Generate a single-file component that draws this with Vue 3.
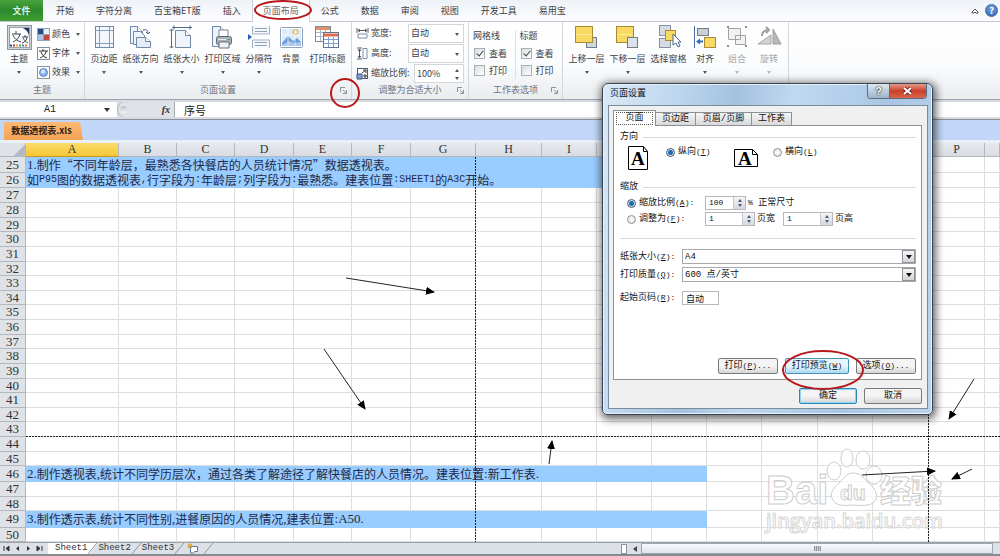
<script setup>
import { ref } from 'vue'

const tabs = ['开始', '字符分离', '百宝箱ET版', '插入', '页面布局', '公式', '数据', '审阅', '视图', '开发工具', '易用宝']

const page = (x, y, w, h) =>
  `<path d="M${x} ${y}h${w - 5}l5 5v${h - 5}h${-w}z" fill="#eef4fb" stroke="#7188a6"/><path d="M${x + w - 5} ${y}v5h5" fill="#fff" stroke="#7188a6"/>`

const icons = {
  theme: `<rect x=".5" y=".5" width="24" height="24" fill="#cfd4d9" stroke="#8d949b"/><rect x="2.500" y="2.500" width="20" height="20" fill="#fff" stroke="#9aa3ad"/><path d="M16 3h6v9c0-4-2-7-6-9z" fill="#1d2f63"/><path d="M5 9h9M9 6v3M6 17c4-2 6-4 7-8M6 10c1 3 4 6 8 7M15 12h6M18 10v2M15 18c3-1 5-3 5-6M16 13c1 2 3 4 5 5" fill="none" stroke="#3b4754"/><path d="M3 20.500h2" stroke="#27509b" stroke-width="2"/><path d="M6 20.500h2" stroke="#c33" stroke-width="2"/><path d="M9 20.500h2" stroke="#e8a23a" stroke-width="2"/><path d="M12 20.500h2" stroke="#6a9a3b" stroke-width="2"/><path d="M15 20.500h2" stroke="#2a9ac0" stroke-width="2"/><path d="M18 20.500h2" stroke="#e07b25" stroke-width="2"/>`,
  margins: `<rect x="3.500" y="1.500" width="18" height="21" fill="#f4f8fc" stroke="#7188a6"/><path d="M7.500 2v20M17.500 2v20M4 5.500h17M4 18.500h17" stroke="#7f9fc9"/>`,
  orient: page(2.5, 1.500, 12, 17) + `<path d="M5.500 6.500h7l4 4v9h-11z" fill="#eef4fb" stroke="#7188a6"/><path d="M8.500 12.500h9l5 4v6h-14z" fill="#e4edf7" stroke="#7188a6"/><path d="M17.500 12.500v4h5" fill="#fff" stroke="#7188a6"/><path d="M15 5c3-1 5 0 5 4M18 7l2 2 2-2" fill="none" stroke="#3b5d93"/>`,
  size: `<path d="M3 2.500h20M5 .5v4M21 .5v4M2.500 4v19M.5 5h4M.5 22h4" stroke="#53698d" fill="none"/>` + page(6.5, 5.500, 15, 17),
  area: page(2.5, 1.500, 13, 20) + `<path d="M9 11v-6h9v6" fill="#fff" stroke="#7b8590"/><rect x="6.500" y="11.500" width="15" height="8" rx="2" fill="#a9b1ba" stroke="#5c6670"/><path d="M9 17h10v6h-10z" fill="#eef2f5" stroke="#68737e"/><path d="M8 14.500h8" stroke="#e8edf0"/><path d="M18 14.500h2" stroke="#4d9a49"/>`,
  breaks: `<path d="M5.500 1v8h17v-8M5.500 23v-8h17v8" fill="#f4f8fc" stroke="#9fb2c9"/><path d="M8 3.500h12M8 6.500h12M8 17.500h12M8 20.500h12" stroke="#8fa2b9"/><path d="M1 9l4 3-4 3z" fill="#285cc0"/>`,
  background: `<rect x="1.500" y="2.500" width="22" height="20" rx="1" fill="#fff" stroke="#8ca0b8"/><rect x="3" y="4" width="19" height="17" fill="#dcebfa"/><circle cx="16.500" cy="7" r="2.500" fill="#fff0b8" stroke="#e0a24a"/><path d="M3 18l6-7 5 5 4-3 4 4v4h-19z" fill="#6d9edb"/><path d="M3 20l7-4 5 2 7-1v4h-19z" fill="#a9c8ee"/><path d="M9 3v18M16 10v11M3 10h19" stroke="#fff" opacity=".6"/>`,
  titles: `<rect x=".5" y="1.500" width="15" height="15" fill="#fff" stroke="#7b8ba0"/><path d="M1 3.500h14" stroke="#e2906a" stroke-width="3"/><path d="M1 7.500h14M1 11.500h14M5.500 5v11M10.500 5v11" stroke="#a8b8cc"/><rect x="8.500" y="7.500" width="15" height="15" fill="#fff" stroke="#61748f"/><path d="M9 10h14" stroke="#dc6f4c" stroke-width="3"/><path d="M9 14.500h14M9 18.500h14M13.500 12v10M18.500 12v10" stroke="#7ea0d0"/>`,
  forward: `<rect x="12.500" y="12.500" width="10" height="10" fill="#cfd7df" stroke="#6f7a86"/><rect x="1.500" y="1.500" width="17" height="16" fill="#f8d964" stroke="#a98c32"/><path d="M3 9.500h14" stroke="#fff0a5"/>`,
  backward: `<rect x="1.500" y="1.500" width="17" height="16" fill="#f8d964" stroke="#a98c32"/><path d="M3 9.500h14" stroke="#fff0a5"/><rect x="12.500" y="12.500" width="10" height="10" fill="#dbe2e9" stroke="#6f7a86"/>`,
  pane: `<rect x="3.500" y=".5" width="11" height="10" fill="#d5dbe1" stroke="#89939e"/><rect x="3.500" y="13.500" width="11" height="9" fill="#d5dbe1" stroke="#89939e"/><rect x="9.500" y="5.500" width="10" height="10" fill="#f8d964" stroke="#a98c32"/><path d="M17 9v11l3-2 2 4 2-1-2-4h3z" fill="#fff" stroke="#4b6790"/>`,
  align: `<path d="M1.500 1v22" stroke="#4168a3"/><rect x="4.500" y="3.500" width="11" height="7" fill="#c9d0d7" stroke="#6f7a86"/><rect x="11.500" y="12.500" width="11" height="10" fill="#f8d964" stroke="#a98c32"/><path d="M3 16.500l4-3v2h3v2h-3v2z" fill="#3569ba"/>`,
  group: `<path d="M3.500 3.500h12v11h-12zM10.500 10.500h10v9h-10z" fill="#f2f2f2" stroke="#a2a2a2"/><path d="M2 2h2M20 2h2M2 21h2M20 21h2" stroke="#8e8e8e" stroke-width="2"/>`,
  rotate: `<path d="M1 19l13-9v9z" fill="#d3d3d3" stroke="#a5a5a5"/><path d="M16 4l8 15h-8z" fill="#b8b8b8" stroke="#a0a0a0"/><path d="M5 11c0-5 3-6 7-6M9 2l3 3-3 3" fill="none" stroke="#a0a0a0" stroke-width="2"/>`,
  colors: `<rect width="13" height="13" fill="#8fa4bd"/><path d="M1 1h5v5h-5z" fill="#274b84"/><path d="M7 1h5v5h-5z" fill="#e6eef6"/><path d="M1 7h5v5h-5z" fill="#a8c4e6"/><path d="M7 7h5v5h-5z" fill="#c2473c"/>`,
  fonts: `<rect x=".5" y=".5" width="12" height="12" fill="#fff" stroke="#7d8fa8"/><path d="M2 4h9M6 2v2M3 11c4-2 6-4 6-7M4 5c1 3 3 5 6 6" fill="none" stroke="#2b3037"/>`,
  effects: `<rect x=".5" y=".5" width="12" height="12" fill="#fff" stroke="#8c9099"/><circle cx="6.500" cy="6.500" r="4" fill="#8db5ec" stroke="#5a81c0"/><circle cx="6" cy="5.500" r="2" fill="#d6e6fb"/>`,
  width: `<path d="M1 1v5M12 1v5M2 3.500h9" stroke="#54585f"/><path d="M2 7h9v4h-9z" fill="#fff" stroke="#7c8ea8"/><path d="M4 2l-2 1.500 2 1.500M9 2l2 1.500-2 1.500" fill="none" stroke="#54585f"/>`,
  height: `<path d="M1 1h5M1 12h5M3.500 2v9" stroke="#54585f"/><path d="M7 1.500h4v10h-4z" fill="#fff" stroke="#7c8ea8"/><path d="M2 4l1.500-2 1.500 2M2 9l1.500 2 1.500-2" fill="none" stroke="#54585f"/>`,
  scale: `<rect x="1.500" y="1.500" width="10" height="10" fill="#fff" stroke="#4a5f80"/><path d="M1 7h5v5h-5z" fill="#7ba0d4" stroke="#3b5480"/><path d="M6 6l4-3M10 6v-3h-3M7 9h4M9 7v4" fill="none" stroke="#333"/>`,
}

const themeItems = [['colors', '颜色'], ['fonts', '字体'], ['effects', '效果']]
const setup = [
  { i: 'margins', t: '页边距', s: 1, d: 1 }, { i: 'orient', t: '纸张方向', d: 1 }, { i: 'size', t: '纸张大小', d: 1 },
  { i: 'area', t: '打印区域', d: 1 }, { i: 'breaks', t: '分隔符', s: 1, d: 1 }, { i: 'background', t: '背景', s: 1 }, { i: 'titles', t: '打印标题' },
]
const arrange = [
  { i: 'forward', t: '上移一层', d: 1 }, { i: 'backward', t: '下移一层', d: 1 }, { i: 'pane', t: '选择窗格' },
  { i: 'align', t: '对齐', s: 1, d: 1 }, { i: 'group', t: '组合', s: 1, d: 1, off: true }, { i: 'rotate', t: '旋转', s: 1, d: 1, off: true },
]

const columns = 'ABCDEFGHIJKLMNOPQ'.split('')
const heights = [16, 15, 15, 15, 14, 15, 15, 14, 15, 14, 15, 15, 14, 15, 15, 14, 15, 14, 15, 15, 14, 16, 15, 14, 17, 14]
// Each filled row is a run of pieces; c names the face used for the Latin ones.
const filled = {
  25: [{ t: '1.', c: 'serif' }, { t: '制作“不同年龄层，最熟悉各快餐店的人员统计情况”数据透视表。' }],
  26: [
    { t: '如' }, { t: 'P95', c: 'mono' }, { t: '图的数据透视表' }, { t: ',', c: 'mono' }, { t: '行字段为' }, { t: ':', c: 'mono' },
    { t: '年龄层' }, { t: ';', c: 'mono' }, { t: '列字段为' }, { t: ':', c: 'mono' }, { t: '最熟悉。建表位置' },
    { t: ':SHEET1', c: 'mono' }, { t: '的' }, { t: 'A3C', c: 'mono' }, { t: '开始。' },
  ],
  46: [{ t: '2.', c: 'serif' }, { t: '制作透视表' }, { t: ',', c: 'serif' }, { t: '统计不同学历层次，通过各类了解途径了解快餐店的人员情况。建表位置' }, { t: ':', c: 'serif' }, { t: '新工作表' }, { t: '.', c: 'serif' }],
  49: [{ t: '3.', c: 'serif' }, { t: '制作透示表' }, { t: ',', c: 'serif' }, { t: '统计不同性别' }, { t: ',', c: 'serif' }, { t: '进餐原因的人员情况' }, { t: ',', c: 'serif' }, { t: '建表位置' }, { t: ':A50.', c: 'serif' }],
}
const rows = heights.map((h, k) => ({ n: 25 + k, h, parts: filled[25 + k] }))

const orientation = ref('portrait')
const scaling = ref('ratio')
</script>

<template>
  <div class="app" lang="zh-CN">
    <nav class="tabbar">
      <button class="file">文件</button>
      <button v-for="t in tabs" :key="t" class="tab" :class="{ active: t === '页面布局' }">{{ t }}</button>
      <span class="spacer"></span>
      <button class="fold" aria-label="收起功能区">
        <svg width="8" height="8" viewBox="0 0 8 8"><path d="M1 5l3-3 3 3v1h-2l-1-1-1 1h-2z" fill="#fff" stroke="#555" /></svg>
      </button>
      <button class="help" aria-label="帮助">?</button>
    </nav>

    <div class="ribbon">
      <section class="group theme">
        <div class="tools">
          <button class="big narrow">
            <svg width="25" height="25" viewBox="0 0 25 25" v-html="icons.theme"></svg>
            <span>主题</span><i class="down"></i>
          </button>
          <div class="stack">
            <button v-for="[i, t] in themeItems" :key="i" class="small">
              <svg width="13" height="13" viewBox="0 0 13 13" v-html="icons[i]"></svg>
              <span>{{ t }}</span><i class="down"></i>
            </button>
          </div>
        </div>
        <h2>主题</h2>
      </section>

      <section class="group setup">
        <div class="tools">
          <button v-for="b in setup" :key="b.t" class="big" :class="{ narrow: b.s }">
            <svg width="25" height="25" viewBox="0 0 25 25" v-html="icons[b.i]"></svg>
            <span>{{ b.t }}</span><i v-if="b.d" class="down"></i>
          </button>
        </div>
        <h2>页面设置</h2>
        <button class="launch" aria-label="页面设置选项"><svg width="7" height="7" viewBox="0 0 7 7"><path d="M.5 5v-4.500h4.500M3 3l3 3M6.500 3v3.500h-3.500" fill="none" stroke="#8a919b" /></svg></button>
      </section>

      <section class="group fit">
        <div class="fitrows">
          <div class="fitrow">
            <svg width="13" height="13" viewBox="0 0 13 13" v-html="icons.width"></svg>
            <label for="fw">宽度:</label>
            <span class="drop"><select id="fw"><option>自动</option></select><i class="down"></i></span>
          </div>
          <div class="fitrow">
            <svg width="13" height="13" viewBox="0 0 13 13" v-html="icons.height"></svg>
            <label for="fh">高度:</label>
            <span class="drop"><select id="fh"><option>自动</option></select><i class="down"></i></span>
          </div>
          <div class="fitrow">
            <svg width="13" height="13" viewBox="0 0 13 13" v-html="icons.scale"></svg>
            <label for="fs">缩放比例:</label>
            <span class="drop pct"><input id="fs" type="text" value="100%" /><i class="up"></i><i class="down"></i></span>
          </div>
        </div>
        <h2>调整为合适大小</h2>
        <button class="launch" aria-label="调整选项"><svg width="7" height="7" viewBox="0 0 7 7"><path d="M.5 5v-4.500h4.500M3 3l3 3M6.500 3v3.500h-3.500" fill="none" stroke="#8a919b" /></svg></button>
      </section>

      <section class="group options">
        <div class="checks">
          <div class="checkcol">
            <b>网格线</b>
            <label><input type="checkbox" checked />查看</label>
            <label><input type="checkbox" />打印</label>
          </div>
          <div class="checkcol">
            <b>标题</b>
            <label><input type="checkbox" checked />查看</label>
            <label><input type="checkbox" />打印</label>
          </div>
        </div>
        <h2>工作表选项</h2>
        <button class="launch" aria-label="工作表选项设置"><svg width="7" height="7" viewBox="0 0 7 7"><path d="M.5 5v-4.500h4.500M3 3l3 3M6.500 3v3.500h-3.500" fill="none" stroke="#8a919b" /></svg></button>
      </section>

      <section class="group arrange">
        <div class="tools">
          <button v-for="b in arrange" :key="b.t" class="big" :class="{ narrow: b.s }" :disabled="b.off">
            <svg width="25" height="25" viewBox="0 0 25 25" v-html="icons[b.i]"></svg>
            <span>{{ b.t }}</span><i v-if="b.d" class="down"></i>
          </button>
        </div>
      </section>
    </div>

    <div class="formula">
      <div class="namebox"><input type="text" value="A1" aria-label="名称框" /><i class="down"></i></div>
      <div class="fxbar"><span class="knob"></span><button class="fx">fx</button></div>
      <input class="content" type="text" value="序号" aria-label="编辑栏" />
    </div>

    <div class="books"><button class="book">数据透视表.xls</button></div>

    <main class="grid">
      <table>
        <colgroup>
          <col class="head" /><col v-for="c in columns" :key="c" :class="'col' + c" />
        </colgroup>
        <thead>
          <tr>
            <th class="corner"></th>
            <th v-for="c in columns" :key="c" :class="{ picked: c === 'A' }">{{ c === 'Q' ? '' : c }}</th>
          </tr>
        </thead>
        <tbody>
          <tr v-for="r in rows" :key="r.n" :style="{ height: r.h + 'px' }">
            <th>{{ r.n }}</th>
            <template v-if="r.parts">
              <td colspan="11" class="fill"><div class="run"><span v-for="(p, k) in r.parts" :key="k" :class="p.c">{{ p.t }}</span></div></td>
              <td v-for="c in 6" :key="c"></td>
            </template>
            <template v-else><td v-for="c in columns" :key="c"></td></template>
          </tr>
        </tbody>
      </table>
    </main>

    <footer class="sheets">
      <div class="nav">
        <button aria-label="首个"><svg width="7" height="7" viewBox="0 0 7 7"><path d="M1 1v5M6 1v5l-3-2.500z" fill="#333" stroke="#333" /></svg></button>
        <button aria-label="上一个"><svg width="7" height="7" viewBox="0 0 7 7"><path d="M5 1v5l-3-2.500z" fill="#333" /></svg></button>
        <button aria-label="下一个"><svg width="7" height="7" viewBox="0 0 7 7"><path d="M2 1v5l3-2.500z" fill="#333" /></svg></button>
        <button aria-label="最后"><svg width="7" height="7" viewBox="0 0 7 7"><path d="M6 1v5M1 1v5l3-2.500z" fill="#333" stroke="#333" /></svg></button>
      </div>
      <button v-for="n in 3" :key="n" class="sheet" :class="{ on: n === 1 }">
        Sheet{{ n }}<svg width="11" height="12" viewBox="0 0 11 12"><path d="M0 12L10 0" stroke="#8f959d" /></svg>
      </button>
      <button class="sheet" aria-label="插入工作表">
        <svg class="add" width="12" height="11" viewBox="0 0 12 11"><path d="M3.500 3.500h7v5h-3l-1 1.500h-3z" fill="#fff" stroke="#5a77a8" /><path d="M3 0v6M0 3h6M1 1l4 4M5 1l-4 4" stroke="#e0a030" /></svg>
        <svg width="11" height="12" viewBox="0 0 11 12"><path d="M0 12L10 0" stroke="#8f959d" /></svg>
      </button>
      <span class="spacer"></span>
      <div class="hscroll">
        <span class="split"></span>
        <i class="left"></i>
        <div class="thumb"><span></span></div>
      </div>
    </footer>

    <svg class="canvas" width="1000" height="556" viewBox="0 0 1000 556">
      <defs>
        <marker id="tip" markerWidth="9" markerHeight="8" refX="8" refY="4" orient="auto" markerUnits="userSpaceOnUse"><path d="M0 0l9 4-9 4z" /></marker>
      </defs>
      <g class="mark">
        <ellipse cx="834" cy="471" rx="7" ry="9" /><ellipse cx="847" cy="458" rx="6" ry="9" />
        <ellipse cx="863" cy="460" rx="7" ry="9" /><ellipse cx="874" cy="475" rx="8" ry="9" />
        <path d="M853 473c-7 0-9 6-14 10-6 5-9 10-7 15 3 8 10 8 21 7 11 1 20 1 23-6 2-6-2-11-7-16-5-4-8-10-16-10z" />
        <text x="766" y="504" class="brand">Bai</text>
        <text x="840" y="500" class="du">du</text>
        <text x="880" y="502" class="cn">经验</text>
        <text x="766" y="528" class="url">jingyan.baidu.com</text>
      </g>
      <g class="breaks">
        <path d="M26 436.500H1000" /><path d="M475.500 157V542" /><path d="M928.500 414V542" />
      </g>
      <g stroke="#222">
        <path d="M346 278L434 292" marker-end="url(#tip)" /><path d="M324 349L365 409" marker-end="url(#tip)" />
        <path d="M549 464L552 441" marker-end="url(#tip)" /><path d="M974 379L949 419" marker-end="url(#tip)" />
        <path d="M862 475L935 471" marker-end="url(#tip)" /><path d="M972 469L952 479" marker-end="url(#tip)" />
      </g>
    </svg>

    <div class="dialog" role="dialog" aria-labelledby="dlg">
      <header>
        <h1 id="dlg">页面设置</h1>
        <div class="winbtns"><button class="ask">?</button><button class="close" aria-label="关闭"><svg width="9" height="8" viewBox="0 0 9 8"><path d="M1 1l7 6M8 1l-7 6" stroke="#7a2a20" stroke-width="4" /><path d="M1 1l7 6M8 1l-7 6" stroke="#fff" stroke-width="2" /></svg></button></div>
      </header>
      <div class="client">
        <div class="dtabs">
          <button class="sel"><span>页面</span></button><button>页边距</button><button>页眉/页脚</button><button>工作表</button>
        </div>
        <div class="panel">
          <h3>方向</h3>
          <div class="orient">
            <svg width="21" height="25" viewBox="0 0 21 25"><path d="M.5 .5h15l4 5v18h-19z" fill="#fff" stroke="#000" /><path d="M15.500 .5v5h4" fill="none" stroke="#000" /><text x="3" y="19" class="glyph">A</text></svg>
            <label class="o1"><input v-model="orientation" type="radio" name="o" value="portrait" />纵向<small>(<u>T</u>)</small></label>
            <svg class="land" width="25" height="19" viewBox="0 0 25 19"><path d="M.5 .5h18l5 5v12h-23z" fill="#fff" stroke="#000" /><path d="M18.500 .5v5h5" fill="none" stroke="#000" /><text x="4" y="16" class="glyph">A</text></svg>
            <label class="o2"><input v-model="orientation" type="radio" name="o" value="landscape" />横向<small>(<u>L</u>)</small></label>
          </div>
          <h3 class="second">缩放</h3>
          <div class="line">
            <label class="scale"><input v-model="scaling" type="radio" name="s" value="ratio" />缩放比例<small>(<u>A</u>):</small></label>
            <span class="spin s1"><input type="text" value="100" aria-label="缩放比例" /><em><i class="up"></i><i class="down"></i></em></span>
            <span class="after"><small>%</small> 正常尺寸</span>
          </div>
          <div class="line">
            <label class="scale"><input v-model="scaling" type="radio" name="s" value="fit" />调整为<small>(<u>F</u>):</small></label>
            <span class="spin"><input type="text" value="1" aria-label="页宽" /><em><i class="up"></i><i class="down"></i></em></span>
            <span class="after wide">页宽</span>
            <span class="spin"><input type="text" value="1" aria-label="页高" /><em><i class="up"></i><i class="down"></i></em></span>
            <span class="after">页高</span>
          </div>
          <hr />
          <div class="field"><label for="paper">纸张大小<small>(<u>Z</u>):</small></label><span class="combo"><select id="paper"><option>A4</option></select><b><i class="down"></i></b></span></div>
          <div class="field"><label for="dpi">打印质量<small>(<u>Q</u>):</small></label><span class="combo"><select id="dpi"><option>600 点/英寸</option></select><b><i class="down"></i></b></span></div>
          <div class="field first"><label for="start">起始页码<small>(<u>R</u>):</small></label><input id="start" type="text" value="自动" /></div>
          <div class="actions">
            <button>打印<small>(<u>P</u>)...</small></button>
            <button class="hot">打印预览<small>(<u>W</u>)</small></button>
            <button>选项<small>(<u>O</u>)...</small></button>
          </div>
        </div>
        <div class="bottom"><button class="ok">确定</button><button>取消</button></div>
      </div>
    </div>

    <svg class="rings" width="1000" height="556" viewBox="0 0 1000 556" fill="none" stroke="#b8181c" stroke-width="2">
      <ellipse cx="283" cy="10" rx="28" ry="9" /><circle cx="345" cy="93" r="14" /><ellipse cx="823" cy="370" rx="40" ry="19" />
    </svg>
  </div>
</template>

<style>
body { margin: 0; background: #fff; }
</style>

<style scoped>
.app { position: relative; overflow: hidden; font: 9px/12px "Noto Sans CJK SC", "Noto Sans", sans-serif; color: #3c4047; }
.app * { box-sizing: border-box; }
button, input, select { font: inherit; color: inherit; margin: 0; padding: 0; border: 0; background: none; border-radius: 0; outline: 0; }
button { white-space: nowrap; }
select { appearance: none; }
svg { display: block; flex: none; }
h1, h2, h3 { margin: 0; font: inherit; }
.spacer { flex: 1; }
small { font: 8px/12px "Liberation Mono", monospace; }
.down, .up, .left { display: block; width: 0; height: 0; border: 2px solid transparent; }
.down { border-width: 3px 2px 0; border-top-color: #555; }
.up { border-width: 0 2px 3px; border-bottom-color: #555; }
.left { border-width: 3px 4px 3px 0; border-right-color: #444; }

.tabbar { display: flex; height: 22px; background: linear-gradient(#eef2f7, #fdfdfe); border-bottom: 1px solid #c5c9cf; }
.file { width: 43px; height: 21px; margin-right: 2px; background: linear-gradient(#4aa23c, #2c8a2c 50%, #3f9f33); color: #fff; font-weight: 500; }
.tab { height: 22px; padding: 0 11px; }
.tab.active { background: #fff; border: 1px solid #cdd1d7; border-width: 0 1px; padding: 0 10px; color: #6c6265; }
.fold { width: 16px; padding: 0 4px; }
.help { width: 13px; height: 13px; margin: 4px 2px 0 2px; border-radius: 50%; background: radial-gradient(circle at 50% 30%, #77a5e0, #2f62b0); border: 1px solid #3b66a8; color: #fff; font-weight: 700; line-height: 11px; }

.ribbon { display: flex; height: 78px; background: linear-gradient(#fff, #fbfcfd 55%, #e9ecf0); border-bottom: 1px solid #9da3ab; }
.group { position: relative; display: flex; flex-direction: column; border-right: 1px solid #d3d7dc; }
.group h2 { margin-top: auto; margin-bottom: 3px; text-align: center; color: #70757e; line-height: 12px; }
.theme { width: 85px; }
.setup { width: 267px; }
.fit { width: 117px; }
.options { width: 94px; }
.arrange { width: 226px; }
.tools { display: flex; padding: 3px 3px 0; }
.big { display: flex; flex-direction: column; align-items: center; width: 41px; height: 54px; line-height: 12px; flex: none; }
.big.narrow { width: 32px; }
.big span { margin-top: 3px; }
.big .down { margin-top: 6px; }
.big:disabled { color: #a5a5a5; }
.big:disabled .down { border-top-color: #b5b5b5; }
.stack { display: flex; flex-direction: column; gap: 5px; padding: 2px 0 0 2px; }
.small { display: flex; align-items: center; height: 14px; gap: 2px; }
.small .down { margin-left: 4px; }
.launch { position: absolute; right: 4px; bottom: 5px; }
.fitrows { padding: 1px 4px 0; }
.fitrow { display: flex; align-items: center; height: 20px; gap: 2px; }
.drop { display: flex; align-items: center; position: relative; width: 56px; height: 19px; margin-left: auto; background: #fff; border: 1px solid #d3d7dc; }
.drop select, .drop input { width: 100%; padding-left: 2px; height: 17px; }
.drop .down { position: absolute; right: 4px; top: 8px; }
.drop.pct { width: 50px; }
.pct .up { position: absolute; right: 4px; top: 4px; }
.pct .down { top: 12px; }
.checks { display: flex; padding: 8px 0 0 3px; }
.checkcol { width: 47px; display: flex; flex-direction: column; }
.checkcol:first-child { border-right: 1px solid #dde0e4; width: 44px; }
.checkcol:last-child { padding-left: 3px; }
.checkcol b { font-weight: 400; line-height: 12px; margin-bottom: 3px; padding-left: 1px; }
.checkcol label { display: flex; align-items: center; gap: 4px; height: 17px; padding-left: 2px; }
.checkcol input { appearance: none; width: 11px; height: 11px; border: 1px solid #a9afb6; background: linear-gradient(135deg, #d9dcdf, #fff); }
.checkcol input:checked::after { content: ""; display: block; width: 3px; height: 6px; margin: 0 0 0 3px; border: solid #444; border-width: 0 1px 1px 0; transform: rotate(40deg); }

.formula { display: flex; height: 20px; padding: 2px 0; background: #d8dce2; border-bottom: 1px solid #8b9098; }
.namebox { display: flex; align-items: center; width: 117px; background: #fff; }
.namebox input { width: 100px; margin-right: 4px; text-align: center; font: 10px/12px "Liberation Mono", monospace; color: #222; }
.namebox .down { border-width: 4px 3px 0; border-top-color: #333; }
.fxbar { display: flex; align-items: center; width: 58px; background: #dfe2e7; border: 1px solid #a9aeb6; border-width: 0 1px 0 1px; border-radius: 8px 0 0 8px; }
.knob { width: 7px; height: 7px; margin-left: 2px; border-radius: 50%; background: linear-gradient(#b9bec6, #f5f6f8); }
.fx { margin-left: auto; margin-right: 4px; font: italic 700 10px/12px "Liberation Serif", serif; color: #333; }
.content { flex: 1; min-width: 0; padding-left: 9px; background: #fff; font-size: 11px; color: #222; }

.books { display: flex; align-items: flex-end; height: 20px; background: #c2d7f8; }
.book { width: 79px; height: 18px; margin-left: 4px; padding-right: 4px; font-weight: 700; color: #2c2218; background: linear-gradient(#fbb874, #f4a254); clip-path: polygon(0 0, 76px 0, 100% 100%, 0 100%); }

.grid { padding-top: 3px; background: #eaf0f8; }
table { table-layout: fixed; width: 100%; border-collapse: separate; border-spacing: 0; background: #fff; }
.head { width: 26px; } .colA { width: 93px; } .colB { width: 58px; } .colC { width: 58px; } .colD { width: 59px; }
.colE { width: 58px; } .colF { width: 59px; } .colG { width: 65px; } .colH { width: 66px; } .colI { width: 55px; }
.colJ, .colK, .colL, .colN { width: 55px; } .colM, .colO, .colP { width: 56px; }
th, td { padding: 0; border: 1px solid #dcdee0; border-width: 0 1px 1px 0; white-space: nowrap; }
th { background: #dfe3e8; border-color: #b3b8be; font: 12px/12px "Liberation Serif", serif; color: #333; }
thead tr { height: 14px; }
thead th { line-height: 13px; background: linear-gradient(#e6e9ed, #d9dde3); }
thead .picked { background: linear-gradient(#fbdc6a, #f6c636); border-bottom-color: #c99a24; }
thead .corner { background: linear-gradient(135deg, #dfe3e8 70%, #b3bac3 70%); }
tbody th { font-size: 13px; }
td { color: #1d2a4a; }
.fill { background: #99ccff; border-color: #99ccff; padding-left: 1px; }
.run { display: flex; align-items: center; height: 14px; font-size: 12px; line-height: 14px; }
.serif { font-family: "Liberation Serif", serif; font-size: 13px; }
.mono { font: 10px/14px "Liberation Mono", monospace; }

.sheets { display: flex; height: 14px; background: #dce1e8; border-top: 1px solid #9aa0a8; border-bottom: 2px solid #868b92; }
.nav { display: flex; align-items: center; gap: 4px; width: 48px; padding-left: 3px; }
.sheet { display: flex; align-items: center; height: 11px; font: 9px/11px "Liberation Mono", monospace; color: #333; }
.sheet.on { padding-left: 7px; background: #fff; clip-path: polygon(0 0, 100% 0, calc(100% - 10px) 100%, 0 100%); }
.add { margin: 0 4px 0 2px; }
.hscroll { display: flex; align-items: center; gap: 6px; width: 38%; padding-right: 7px; }
.split { width: 6px; height: 10px; background: #fff; border: 1px solid #8f959d; margin-left: 1px; }
.thumb { flex: 1; height: 11px; display: flex; align-items: center; justify-content: center; margin-left: -2px; background: linear-gradient(#f7f9fb, #dfe4eb); border: 1px solid #a0a6ae; }
.thumb span { width: 7px; height: 5px; background: repeating-linear-gradient(90deg, #8f959d 0 1px, #c9ced5 1px 2px); }

.canvas, .rings { position: absolute; left: 0; top: 0; pointer-events: none; }
.breaks path { stroke: #222; stroke-dasharray: 2 1; }
.mark { fill: #ffffffb0; stroke: #cdcdcd; stroke-width: 1; }
.brand { font: 700 40px "Liberation Sans", sans-serif; }
.du { font: 700 21px "Liberation Sans", sans-serif; }
.cn { font: 900 31px "Noto Sans CJK SC", sans-serif; }
.url { font: 600 20px "Open Sans", sans-serif; stroke: #d6d6d6; }

.dialog { position: absolute; left: 602px; top: 83px; width: 331px; padding: 0 4px 5px 5px; border: 1px solid #39434f; border-radius: 6px 6px 5px 5px; background: linear-gradient(100deg, #dbe9f7 0%, #bcd6ee 20%, #a5c1df 35%, #c0d9f0 50%, #a9c6e4 75%, #bdd5ec 100%); box-shadow: inset 0 0 0 1px #e8f2fb, 1px 2px 8px 2px #0009; color: #111; font-family: "Liberation Mono", "Noto Sans CJK SC", monospace; }
.dialog header { display: flex; height: 21px; }
.dialog h1 { padding: 4px 2px; }
.winbtns { display: flex; margin-left: auto; margin-right: 1px; height: 15px; border: 1px solid #5c6c80; border-top: 0; border-radius: 0 0 4px 4px; overflow: hidden; }
.ask { width: 22px; font: 700 11px/13px "Liberation Sans", sans-serif; color: #fff; text-shadow: 0 0 2px #222, 0 0 1px #222; background: linear-gradient(#dbe6f1, #9fb4ca); border-right: 1px solid #5c6c80; }
.close { width: 36px; padding: 0 13px; background: linear-gradient(#e59a8a, #c9402a 50%, #d8664a); }
.client { border: 1px solid #7c8b9c; padding: 4px 5px 4px 4px; background: #f0f0f0; }
.dtabs { display: flex; align-items: flex-end; height: 15px; }
.dtabs button { height: 13px; width: 40px; border: 1px solid #8c9097; border-bottom: 0; border-left: 0; background: linear-gradient(#f5f5f5, #d9d9d9); line-height: 12px; }
.dtabs button.sel { width: 43px; height: 16px; margin-bottom: -1px; padding: 1px 2px; background: #fff; border-left: 1px solid #8c9097; position: relative; }
.sel span { display: block; border: 1px dotted #555; line-height: 11px; }
.dtabs button:nth-child(3) { width: 56px; }
.panel { border: 1px solid #8c9097; background: #fff; padding: 5px 5px 5px 6px; }
.panel h3 { display: flex; align-items: center; gap: 5px; height: 12px; }
.panel h3::after { content: ""; flex: 1; height: 1px; background: #d9d9d9; }
.panel h3.second { margin-top: 11px; }
.panel label { display: flex; align-items: center; height: 12px; white-space: nowrap; }
.panel input[type="radio"] { appearance: none; width: 9px; height: 9px; margin-right: 3px; border: 1px solid #8f9399; border-radius: 50%; background: radial-gradient(#fff, #d8dbdf); flex: none; }
.panel input[type="radio"]:checked { background: radial-gradient(circle, #1b6ca8 0 2px, #cfe3f3 3px); border-color: #557; }
.orient { display: flex; align-items: flex-start; height: 24px; margin: 3px 0 0 8px; }
.glyph { font: 700 19px "Liberation Serif", serif; }
.o1 { margin-left: 17px; width: 68px; }
.land { margin-top: 3px; }
.o2 { margin-left: 14px; }
.line { display: flex; align-items: center; height: 14px; margin-top: 3px; padding-left: 7px; }
.line + .line { margin-top: 2px; }
.scale { width: 78px; }
.spin { display: flex; width: 50px; height: 14px; border: 1px solid #b5b8bd; }
.spin.s1 { width: 41px; }
.spin input { flex: 1; min-width: 0; padding-left: 3px; font-size: 8px; }
.spin em { display: flex; flex-direction: column; justify-content: center; align-items: center; gap: 2px; width: 12px; background: linear-gradient(#f5f5f5, #d5d8dc); border-left: 1px solid #c6c9cd; }
.spin .up { border-bottom-color: #4a5a80; }
.spin .down { border-top-color: #4a5a80; }
.after { margin-left: 2px; white-space: pre; }
.after.wide { width: 26px; }
.panel hr { margin: 12px 0 10px; border: 0; height: 1px; background: #d9d9d9; }
.field { display: flex; align-items: center; height: 15px; margin-bottom: 3px; }
.field label { width: 62px; }
.combo { display: flex; flex: 1; height: 15px; border: 1px solid #a5a8ad; }
.combo select { flex: 1; min-width: 0; padding-left: 2px; font-size: 9px; }
.combo b { width: 13px; display: flex; align-items: center; justify-content: center; border: 1px solid #8f9399; background: linear-gradient(#f5f5f5, #d5d5d5); }
.combo .down { border-width: 4px 3px 0; border-top-color: #111; }
.field.first { height: 14px; margin: 9px 0 0; }
.first input { width: 37px; height: 14px; padding-left: 3px; border: 1px solid #b5b8bd; }
.actions { display: flex; justify-content: flex-end; gap: 7px; margin-top: 53px; }
.actions button, .bottom button { width: 60px; height: 16px; border: 1px solid #777b80; border-radius: 2px; background: linear-gradient(#f4f4f4 50%, #d6d6d6); line-height: 13px; }
.actions .hot { width: 64px; border-color: #4a90b8; background: linear-gradient(#e6f5fd 50%, #a9daf4); }
.bottom { display: flex; justify-content: flex-end; gap: 7px; margin-top: 8px; }
.bottom button { width: 58px; }
.bottom .ok { border: 1px solid #2d8ab5; box-shadow: inset 0 0 0 1px #8fd3ee; }
</style>
